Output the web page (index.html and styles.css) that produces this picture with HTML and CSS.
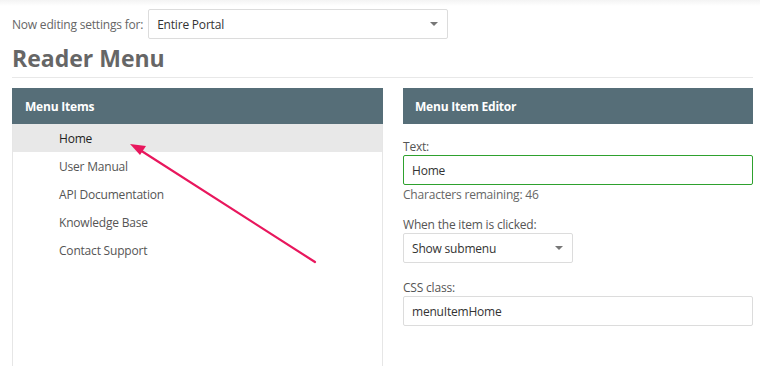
FILE: index.html
```html
<!DOCTYPE html>
<html>
<head>
<meta charset="utf-8">
<link rel="stylesheet" href="styles.css">
</head>
<body>
<div class="shadow"></div>
<div class="page">
  <div class="scope">
    <span class="scope-label">Now editing settings for:</span>
    <div class="select scope-select"><span>Entire Portal</span><span class="caret"></span></div>
  </div>
  <h1 class="title">Reader Menu</h1>
  <div class="rule"></div>
  <div class="columns">
    <div class="panel list-panel">
      <div class="panel-head">Menu Items</div>
      <ul class="items">
        <li class="item active">Home</li>
        <li class="item">User Manual</li>
        <li class="item">API Documentation</li>
        <li class="item">Knowledge Base</li>
        <li class="item">Contact Support</li>
      </ul>
    </div>
    <div class="panel editor">
      <div class="panel-head">Menu Item Editor</div>
      <div class="form">
        <div class="field">
          <div class="label">Text:</div>
          <div class="input focused">Home</div>
          <div class="hint">Characters remaining: 46</div>
        </div>
        <div class="field field-select">
          <div class="label">When the item is clicked:</div>
          <div class="select small-select"><span>Show submenu</span><span class="caret"></span></div>
        </div>
        <div class="field">
          <div class="label">CSS class:</div>
          <div class="input">menuItemHome</div>
        </div>
      </div>
    </div>
  </div>
</div>
<svg class="arrow" width="760" height="366" viewBox="0 0 760 366">
  <line x1="315" y1="262" x2="140" y2="150" stroke="#e8175d" stroke-width="2.2" stroke-linecap="round"/>
  <polygon points="130,144 146,146 140,155" fill="#e8175d"/>
</svg>
</body>
</html>
```

FILE: styles.css
```css
html, body {
  margin: 0;
  padding: 0;
  background: #fff;
  overflow: hidden;
}
body {
  font-family: "Open Sans", "Noto Sans", sans-serif;
  font-size: 12px;
  color: #555;
  position: relative;
  width: 760px;
  height: 366px;
}
.shadow {
  height: 6px;
  background: linear-gradient(#ececec, #fff);
  opacity: 0.6;
}
.page {
  padding: 3px 7px 0 12px;
}
.scope {
  display: flex;
  align-items: center;
  gap: 5px;
}
.scope-label {
  color: #666;
  letter-spacing: -0.2px;
}
.select {
  box-sizing: border-box;
  height: 30px;
  border: 1px solid #dcdcdc;
  border-radius: 2px;
  display: flex;
  align-items: center;
  justify-content: space-between;
  padding: 0 9px 0 8px;
  color: #333;
  letter-spacing: -0.2px;
}
.scope-select {
  width: 300px;
}
.caret {
  width: 0;
  height: 0;
  border-left: 4.5px solid transparent;
  border-right: 4.5px solid transparent;
  border-top: 4.5px solid #777;
}
.title {
  margin: 4px 0 0 0;
  font-size: 23px;
  font-weight: 700;
  color: #666;
  line-height: 30px;
  letter-spacing: 0;
}
.rule {
  height: 1px;
  background: #e8e8e8;
  margin-top: 4px;
}
.columns {
  display: grid;
  grid-template-columns: 371px 350px;
  column-gap: 20px;
  margin-top: 10px;
}
.panel-head {
  height: 36px;
  background: #566e78;
  color: #fff;
  font-weight: 700;
  font-size: 12px;
  display: flex;
  align-items: center;
  padding-left: 12px;
  letter-spacing: -0.2px;
}
.list-panel {
  height: 290px;
  border-left: 1px solid #e6e6e6;
  border-right: 1px solid #e6e6e6;
}
.list-panel .panel-head {
  margin: 0 -1px;
  padding-left: 13px;
}
.items {
  list-style: none;
  margin: 0;
  padding: 0;
}
.item {
  height: 28px;
  line-height: 29px;
  padding-left: 46px;
  color: #555;
  letter-spacing: -0.2px;
}
.item.active {
  background: #e8e8e8;
  color: #222;
}
.form {
  padding-top: 15px;
  display: flex;
  flex-direction: column;
  gap: 12px;
}
.label {
  line-height: 16px;
  color: #555;
  letter-spacing: -0.2px;
}
.input {
  box-sizing: border-box;
  height: 30px;
  border: 1px solid #dcdcdc;
  border-radius: 2px;
  padding: 0 8px;
  display: flex;
  align-items: center;
  color: #333;
  letter-spacing: -0.2px;
}
.input.focused {
  border-color: #2ea12e;
}
.hint {
  line-height: 20px;
  color: #666;
  letter-spacing: -0.2px;
}
.field-select {
  padding-bottom: 5px;
}
.small-select {
  width: 170px;
}
.arrow {
  position: absolute;
  left: 0;
  top: 0;
  pointer-events: none;
}
```
